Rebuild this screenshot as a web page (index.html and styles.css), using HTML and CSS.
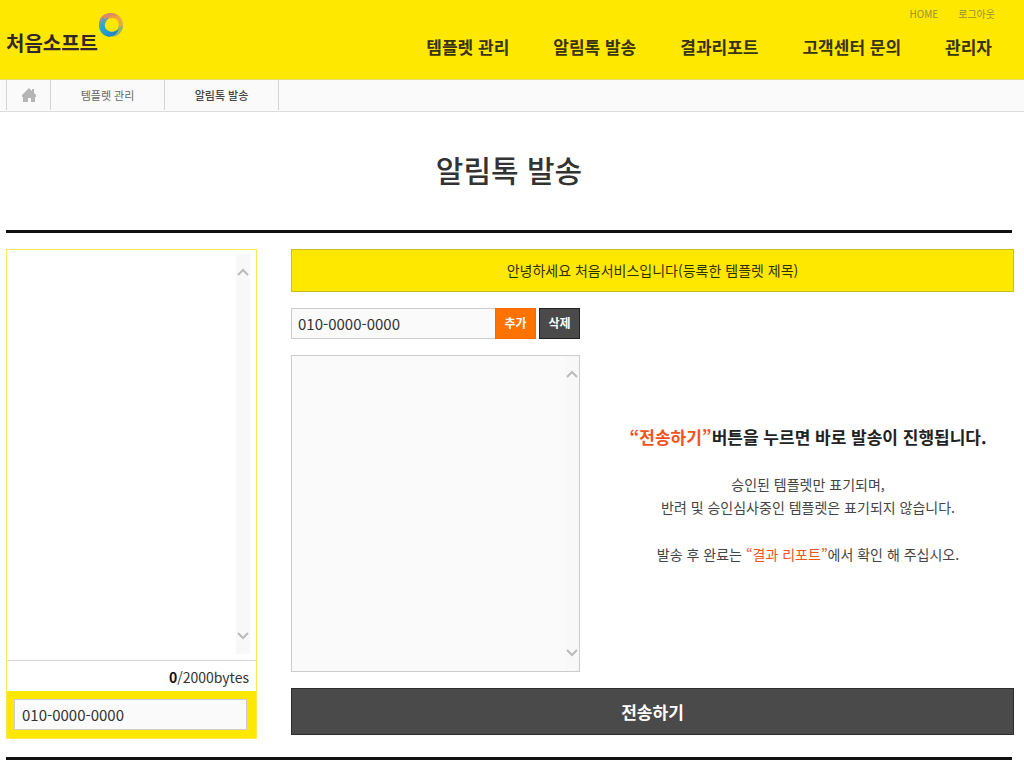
FILE: index.html
```html
<!DOCTYPE html>
<html lang="ko">
<head>
<meta charset="utf-8">
<meta name="viewport" content="width=device-width, initial-scale=1">
<title>알림톡 발송 - 처음소프트</title>
<link rel="stylesheet" href="styles.css">
</head>
<body>
<header class="header">
  <a class="logo" href="#">
    <span class="logo-text">처음소프트</span>
    <svg class="logo-mark" viewBox="0 0 26 26" aria-hidden="true">
      <defs>
        <linearGradient id="warm" x1="0" y1="0" x2="1" y2="1"><stop offset="0" stop-color="#cf8068"/><stop offset=".45" stop-color="#f3a040"/><stop offset="1" stop-color="#c3c04a"/></linearGradient>
        <linearGradient id="cool" x1="0" y1="0" x2="1" y2="1"><stop offset="0" stop-color="#8a9c98"/><stop offset=".4" stop-color="#1fa6d8"/><stop offset="1" stop-color="#2678b4"/></linearGradient>
      </defs>
      <path fill="url(#warm)" d="M1 12C1 5 6 1 13 1c7 0 12 5 12 12 0 6-4 11-10 12 4-2 6-4 6-7l-1-2C22 10 19 6 14 6 9 6 7 9 7 13z"/>
      <path fill="url(#cool)" d="M5 5C-1 10 0 19 6 23c6 4 14 1 15-7-3 4-8 5-12 2C5 14 7 9 11 6 8 6 6 6 5 5z"/>
      <path fill="#8fb46c" d="M21 15c0 5-3 8-7 10 6-1 10-5 11-11z"/>
      <path fill="#d98a62" d="M5 5C9 0 16 0 20 4 15 2 10 4 7 8z"/>
    </svg>
  </a>
  <div class="menus">
    <nav class="util" aria-label="사용자 메뉴"><a href="#">HOME</a><a href="#">로그아웃</a></nav>
    <nav class="gnb" aria-label="주 메뉴">
      <a href="#">템플렛 관리</a><a href="#">알림톡 발송</a><a href="#">결과리포트</a><a href="#">고객센터 문의</a><a href="#">관리자</a>
    </nav>
  </div>
</header>
<nav class="crumbs" aria-label="현재 위치">
  <a class="crumb crumb-home" href="#" aria-label="홈">
    <svg class="home-icon" viewBox="0 0 14 14" aria-hidden="true"><path fill="#b5b5b5" d="M7 0l3 3V1h2v4l2 2v2h-1v5H9v-4H6v4H1V9H0V7z"/></svg>
  </a>
  <a class="crumb" href="#">템플렛 관리</a>
  <a class="crumb crumb-current" href="#" aria-current="page">알림톡 발송</a>
</nav>
<main class="page">
  <h1 class="title">알림톡 발송</h1>
  <form class="send">
    <section class="message">
      <div class="message-body">
        <textarea class="area message-area" aria-label="메시지 내용"></textarea>
        <div class="track message-track" aria-hidden="true">
          <svg class="arrow" viewBox="0 0 12 8"><path d="M1 7l5-5 5 5"/></svg>
          <svg class="arrow" viewBox="0 0 12 8"><path d="M1 1l5 5 5-5"/></svg>
        </div>
      </div>
      <p class="bytes"><b>0</b>/2000bytes</p>
      <div class="sender"><input class="field" type="tel" value="010-0000-0000" aria-label="발신 번호"></div>
    </section>
    <section class="target">
      <p class="template">안녕하세요 처음서비스입니다(등록한 템플렛 제목)</p>
      <div class="columns">
        <div class="receivers">
          <div class="add-row">
            <input class="field" type="tel" value="010-0000-0000" aria-label="수신 번호">
            <button class="small add" type="button">추가</button>
            <button class="small remove" type="button">삭제</button>
          </div>
          <div class="list">
            <textarea class="area list-area" aria-label="수신 번호 목록"></textarea>
            <div class="track list-track" aria-hidden="true">
              <svg class="arrow" viewBox="0 0 12 8"><path d="M1 7l5-5 5 5"/></svg>
              <svg class="arrow" viewBox="0 0 12 8"><path d="M1 1l5 5 5-5"/></svg>
            </div>
          </div>
        </div>
        <div class="info">
          <h2 class="info-title"><span class="accent">“전송하기”</span>버튼을 누르면 바로 발송이 진행됩니다.</h2>
          <p class="info-text">승인된 템플렛만 표기되며,<br>반려 및 승인심사중인 템플렛은 표기되지 않습니다.</p>
          <p class="info-text">발송 후 완료는 <span class="accent">“결과 리포트”</span>에서 확인 해 주십시오.</p>
        </div>
      </div>
      <button class="submit" type="button">전송하기</button>
    </section>
  </form>
</main>
</body>
</html>
```
FILE: styles.css
```css
* { box-sizing: border-box; }
body, h1, h2, p { margin: 0; }
body {
  background: #fff;
  color: #333;
  font: 14px/24px "Noto Sans CJK KR", "Noto Sans", sans-serif;
}
a { color: inherit; text-decoration: none; }
input, textarea, button { font: inherit; color: inherit; border-radius: 0; margin: 0; }
button { cursor: pointer; }

.header {
  display: flex;
  justify-content: space-between;
  height: 80px;
  padding: 0 32px 0 6px;
  background: #ffe800;
  border-bottom: 1px solid #e5dc80;
}
.logo { display: flex; align-items: flex-start; padding-top: 12px; }
.logo-text { padding-top: 19px; font-size: 20px; font-weight: 700; color: #33262c; }
.logo-mark { width: 26px; height: 26px; }
.menus { display: flex; flex-direction: column; align-items: flex-end; padding-top: 5px; }
.util { display: flex; gap: 20px; font-size: 10px; line-height: 18px; color: #9a8e33; margin-right: -3px; }
.gnb { display: flex; gap: 44px; padding-top: 12px; font-size: 17px; font-weight: 700; color: #3a3210; white-space: nowrap; }

.crumbs {
  display: flex;
  height: 32px;
  padding: 0 0 1px 6px;
  background: #fafafa;
  border-bottom: 1px solid #ddd;
}
.crumb {
  display: flex;
  align-items: center;
  justify-content: center;
  width: 114px;
  border-right: 1px solid #d5d5d5;
  font-size: 11px;
  color: #666;
}
.crumb-home { width: 45px; border-left: 1px solid #d5d5d5; }
.crumb-current { font-weight: 500; color: #444; }
.home-icon { width: 14px; height: 14px; }

.page { padding: 0 10px 8px 6px; }
.title {
  margin-right: 2px;
  padding: 33px 0 37px;
  border-bottom: 3px solid #111;
  font-size: 30px;
  line-height: 48px;
  font-weight: 500;
  text-align: center;
}
.send {
  display: grid;
  grid-template-columns: 251fr 723fr;
  align-items: start;
  gap: 34px;
  margin-top: 16px;
  padding-bottom: 18px;
  position: relative;
}
.send::after {
  content: "";
  position: absolute;
  left: 0;
  right: 2px;
  bottom: -3px;
  height: 3px;
  background: #111;
}

.message { border: 1px solid #fbea52; }
.message-body, .list { position: relative; }
.area { display: block; width: 100%; resize: none; outline: 0; padding: 8px 28px 8px 8px; }
.message-area { height: 411px; border: 0; border-bottom: 1px solid #d5d5d5; background: #fff; }
.track {
  position: absolute;
  display: flex;
  flex-direction: column;
  justify-content: space-between;
  align-items: center;
  width: 14px;
  padding: 14px 0;
  background: #f8f8f8;
}
.message-track { top: 4px; right: 6px; bottom: 7px; }
.list-track { top: 1px; right: 1px; bottom: 1px; }
.arrow { width: 12px; height: 8px; fill: none; stroke: #bbb; stroke-width: 2; }
.bytes { padding: 4px 7px 2px; font-size: 14px; text-align: right; }
.bytes b { color: #111; }
.sender { padding: 8px 9px 8px 7px; background: #ffe800; }
.field {
  width: 100%;
  min-width: 0;
  height: 31px;
  padding: 0 7px;
  border: 1px solid #ccc;
  background: #fafafa;
  font-size: 15px;
}

.template {
  padding: 8px 9px 9px;
  border: 1px solid #cdbd18;
  background: #ffe800;
  text-align: center;
  color: #333000;
}
.columns { display: grid; grid-template-columns: 289fr 412fr; gap: 22px; margin: 16px 0; }
.add-row { display: flex; }
.add-row .field { flex: 1; border-right: 0; padding: 0 6px; }
.small { width: 41px; height: 31px; flex: none; padding: 0 0 2px; border: 1px solid; font-size: 12px; line-height: 16px; font-weight: 700; color: #fff; }
.add { background: #ff7200; border-color: #f26a00; }
.remove { margin-left: 3px; background: #4a4a4a; border-color: #222; }
.list { margin-top: 16px; }
.list-area { height: 317px; border: 1px solid #ccc; background: #fafafa; }
.info { display: flex; flex-direction: column; gap: 24px; padding-top: 117px; text-align: center; white-space: nowrap; }
.info-title { font-size: 17px; line-height: 24px; font-weight: 700; color: #222; }
.info-text { line-height: 23px; color: #444; }
.accent { color: #f4511e; }
.submit {
  display: block;
  width: 100%;
  height: 47px;
  padding: 0;
  border: 1px solid #2d2d2d;
  background: #4a4a4a;
  color: #fff;
  font-size: 17px;
  font-weight: 700;
}
```
